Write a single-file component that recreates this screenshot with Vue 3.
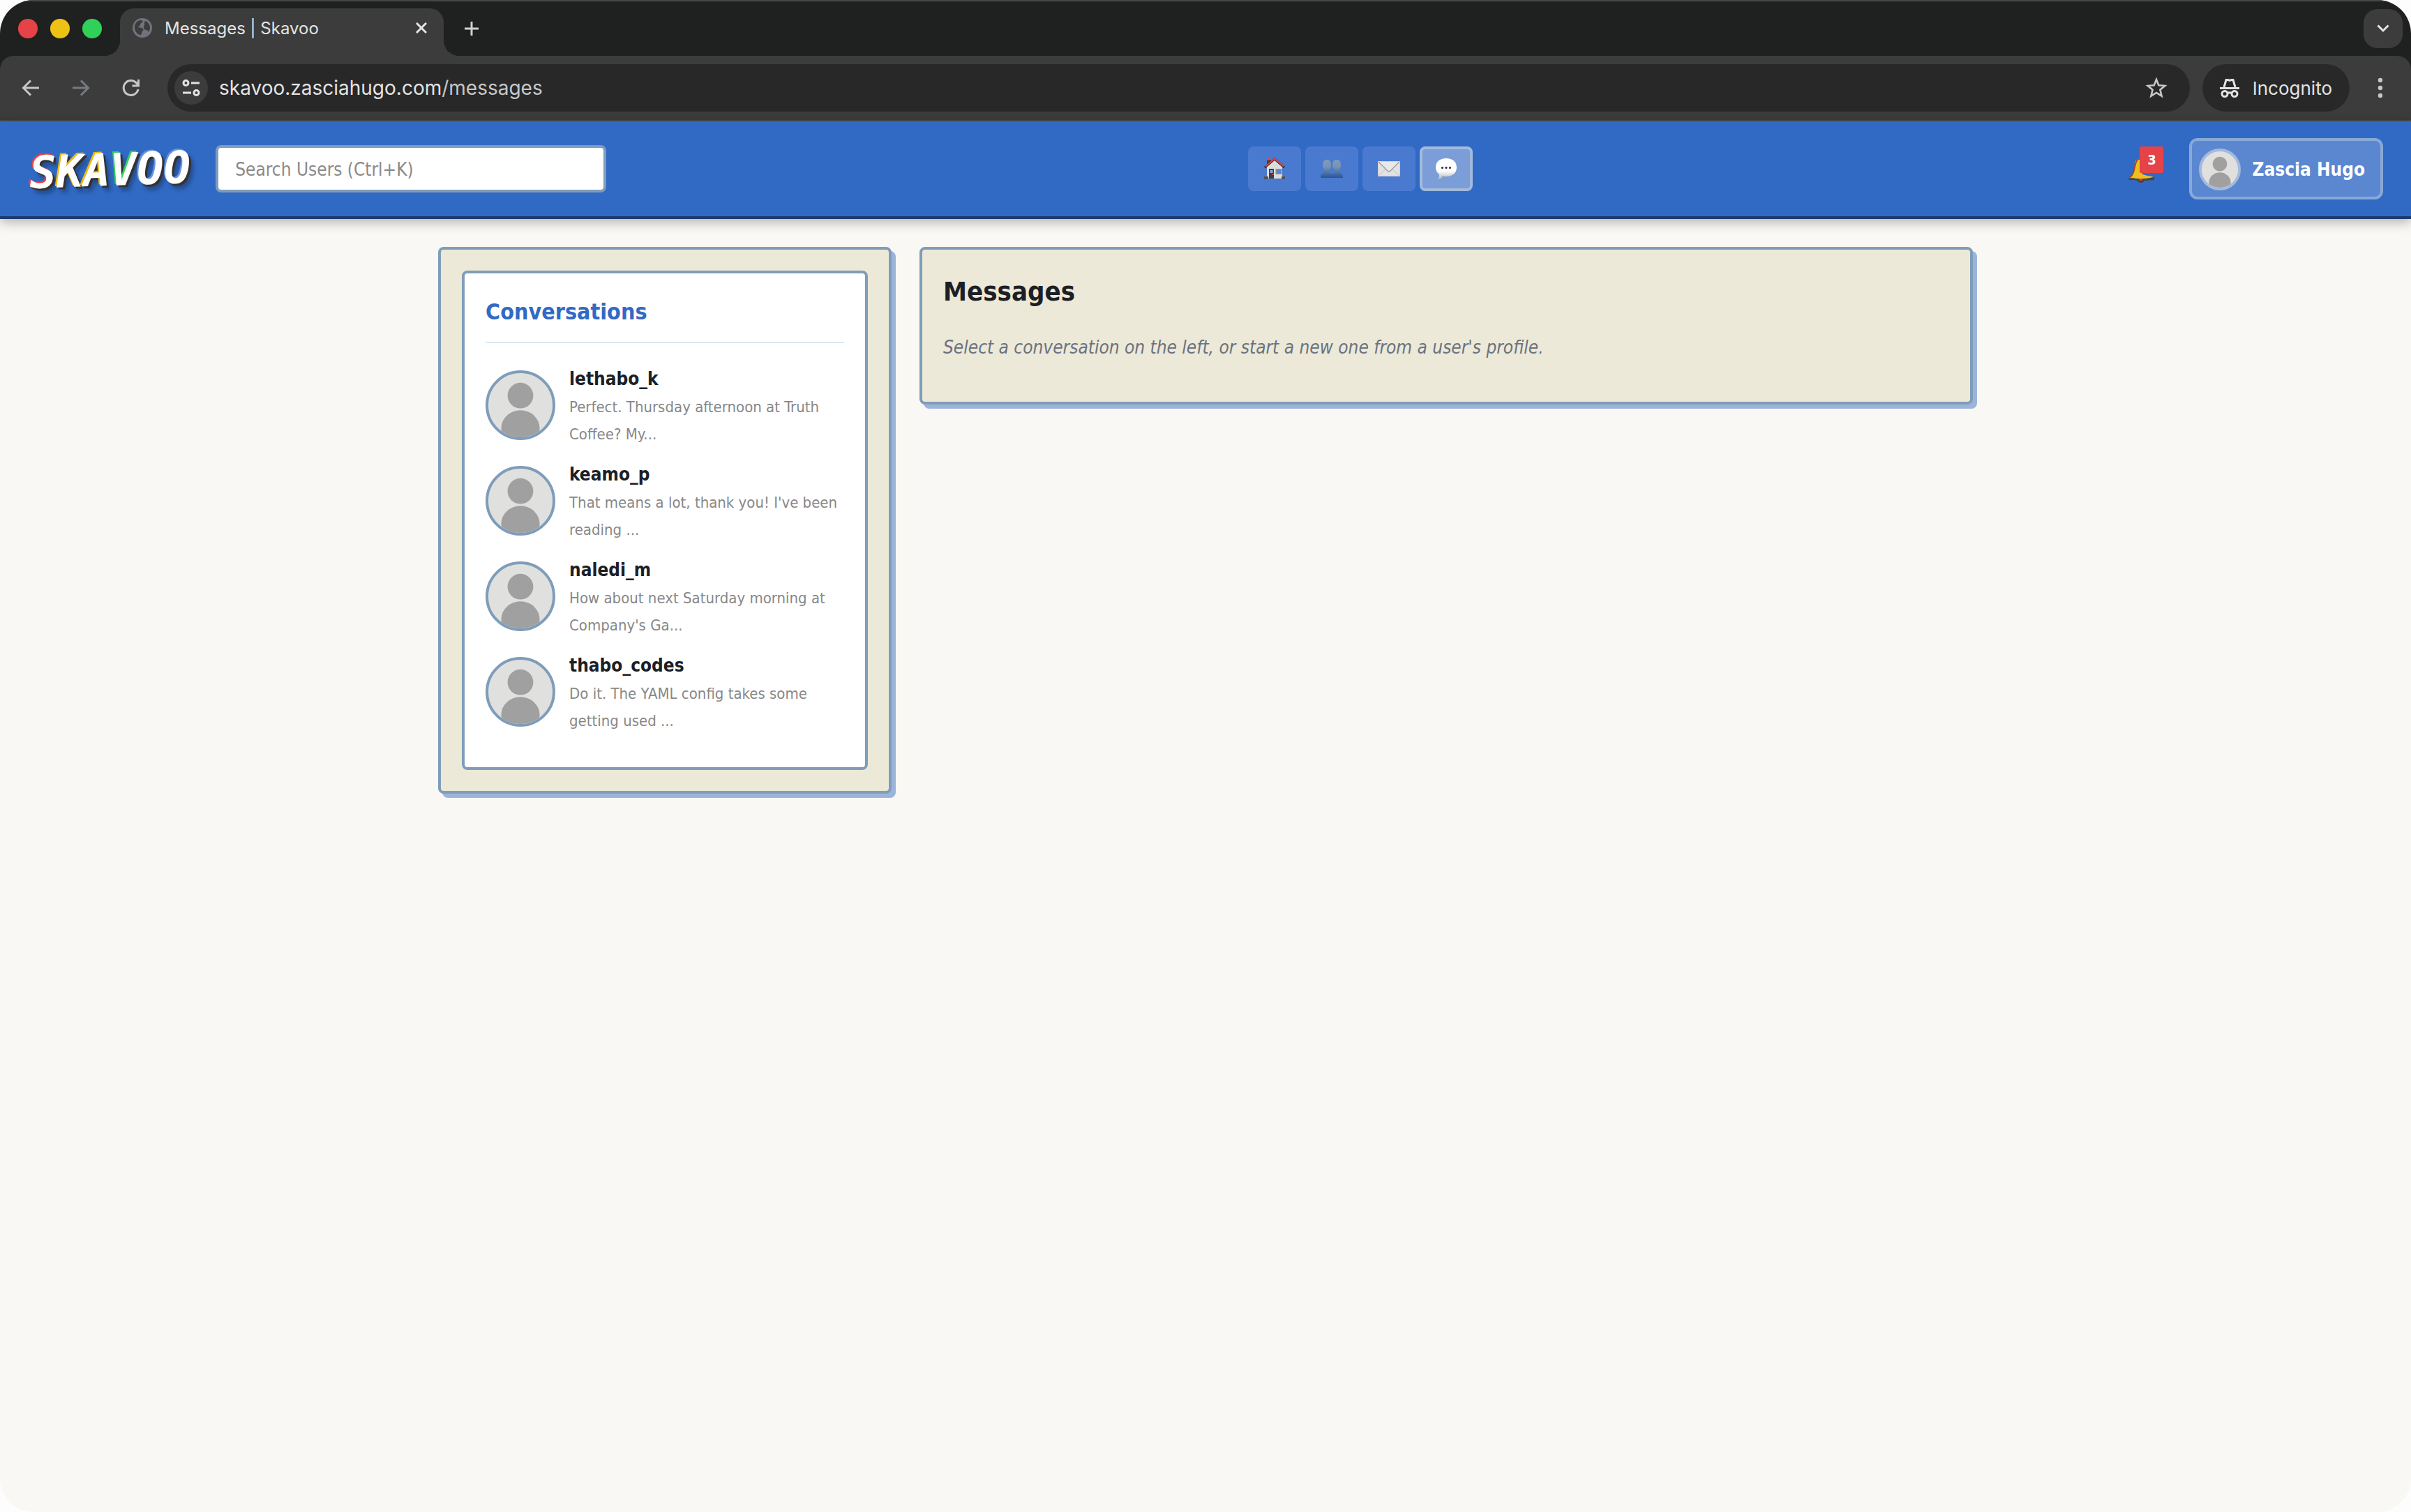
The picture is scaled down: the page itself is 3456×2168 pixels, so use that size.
<template>
  <div class="browser">
    <div class="tab-strip">
      <div class="lights">
        <span class="light red"></span>
        <span class="light yellow"></span>
        <span class="light green"></span>
      </div>
      <div class="tab">
        <svg class="globe" viewBox="0 0 28 28">
          <circle cx="14" cy="14" r="14" fill="#6f737a" />
          <path d="M3 13c0-5 3-9 8-10 3 0 4 1 3 3-1 1-3 1-3 3s-1 2-3 3c0 2 3 1 5 2 3 1 3 3 2 4-2 1-2 2-2 4 0 1-1 2-2 2-5-1-8-6-8-11zM18 4c5 2 7 6 7 10 0 2-1 4-2 6-1-1-1-3-3-3-3 0-4-2-4-4s2-3 1-5c0-2 0-2 1-4z" fill="#3c3c3c" />
        </svg>
        <span class="tab-title">Messages | Skavoo</span>
        <button class="bare" aria-label="Close tab">
          <svg width="16" height="16" viewBox="0 0 16 16"><path d="M1 1l14 14M15 1L1 15" stroke="#e3e3e3" stroke-width="3" /></svg>
        </button>
      </div>
      <button class="bare new-tab" aria-label="New tab">
        <svg width="20" height="20" viewBox="0 0 20 20"><path d="M10 0v20M0 10h20" stroke="#d0d0d0" stroke-width="3" /></svg>
      </button>
      <button class="tab-search" aria-label="Search tabs">
        <svg width="18" height="12" viewBox="0 0 18 12"><path d="M1.5 1.5L9 9l7.5-7.5" fill="none" stroke="#e3e3e3" stroke-width="3" /></svg>
      </button>
    </div>

    <div class="toolbar">
      <div class="nav-buttons">
        <button class="bare" aria-label="Back">
          <svg width="26" height="24" viewBox="0 0 26 24"><path d="M25 12H3M13 1.5L2.5 12 13 22.5" fill="none" stroke="#c7c7c7" stroke-width="3" /></svg>
        </button>
        <button class="bare" aria-label="Forward">
          <svg width="26" height="24" viewBox="0 0 26 24"><path d="M1 12h22M13 1.5L23.5 12 13 22.5" fill="none" stroke="#777b80" stroke-width="3" /></svg>
        </button>
        <button class="bare" aria-label="Reload">
          <svg width="26" height="24" viewBox="0 0 26 24"><path d="M23 14A10.5 10.5 0 1 1 21 5.5L23.5 8.5M23.5 0v9h-9" fill="none" stroke="#c7c7c7" stroke-width="3" /></svg>
        </button>
      </div>
      <div class="address">
        <span class="site-info">
          <svg width="26" height="24" viewBox="0 0 26 24" fill="none" stroke="#e3e3e3" stroke-width="3">
            <circle cx="5.5" cy="5" r="3.5" />
            <path d="M13 5h12M1 19h12" />
            <circle cx="20.5" cy="19" r="3.5" />
          </svg>
        </span>
        <span class="url">skavoo.zasciahugo.com<span class="path">/messages</span></span>
        <button class="bare" aria-label="Bookmark this tab">
          <svg width="32" height="32" viewBox="0 0 32 32"><path d="M16 4l3.300 8.300 9 .7-6.900 5.800 2.200 8.900L16 23l-7.600 4.700 2.200-8.900L3.700 13l9-.7z" fill="none" stroke="#c7c7c7" stroke-width="2.600" /></svg>
        </button>
      </div>
      <div class="incognito">
        <svg width="28" height="28" viewBox="0 0 28 28" fill="none" stroke="#e3e3e3" stroke-width="3">
          <path d="M6 13L9 2.500h2.500l2.500 1 2.500-1H19L22 13M0 14.500h28" />
          <circle cx="7" cy="22.500" r="4" />
          <circle cx="21" cy="22.500" r="4" />
          <path d="M11 21.500c2-1 4-1 6 0" />
        </svg>
        <span>Incognito</span>
      </div>
      <button class="bare" aria-label="Menu">
        <svg width="8" height="30" viewBox="0 0 8 30" fill="#c7c7c7"><circle cx="4" cy="4" r="3.2" /><circle cx="4" cy="15" r="3.2" /><circle cx="4" cy="26" r="3.2" /></svg>
      </button>
    </div>

    <header class="site-header">
      <div class="header-left">
        <a href="#" class="logo" aria-label="Skavoo">
          <span v-for="(l, i) in logo" :key="i" :class="l.tone">{{ l.char }}</span>
        </a>
        <input class="search" type="text" placeholder="Search Users (Ctrl+K)" aria-label="Search users" />
      </div>

      <nav class="main-nav">
        <a href="#" class="nav-item" aria-label="Home">
          <svg width="32" height="32" viewBox="0 0 32 32">
            <path d="M5 12V3h6v5z" fill="#3a3a3a" /><path d="M5 1h5v3H5z" fill="#e54348" />
            <path d="M5 13L16 3l11 10v17H5z" fill="#dcdcdc" />
            <path d="M2 14L16 2l14 12" fill="none" stroke="#2c2c2c" stroke-width="3" />
            <path d="M3 12.500L16 1.500l13 11" fill="none" stroke="#e54348" stroke-width="2" />
            <path d="M8 16h7v14H8z" fill="#3f3f3f" /><path d="M9.500 18h4v4h-4z" fill="#7fa6d8" />
            <path d="M12 24h3v1h-3z" fill="#e54348" />
            <path d="M17.500 16h9v8h-9z" fill="#8d8d8d" /><path d="M19 17.500h6v5h-6z" fill="#5b87cf" />
            <path d="M1 27h6v4H1zM26 27h5v4h-5z" fill="#55544e" />
          </svg>
        </a>
        <a href="#" class="nav-item" aria-label="Friends">
          <svg width="32" height="28" viewBox="0 0 32 28">
            <defs><linearGradient id="bust" x1="0" y1="0" x2="0" y2="1"><stop offset="0" stop-color="#7d9cbc" /><stop offset=".4" stop-color="#7893b4" /><stop offset="1" stop-color="#28559c" /></linearGradient></defs>
            <path d="M9 1c4 0 6 3 6 7s-1 6-3 8v3c2 1 3 1 4 2 1-1 3-1 4-2v-3c-2-2-3-4-3-8s2-7 6-7 6 3 6 7-1 6-3 8v3c4 1 6 3 6 8H0c0-5 2-7 6-8v-3c-2-2-3-4-3-8s2-7 6-7z" fill="url(#bust)" />
          </svg>
        </a>
        <a href="#" class="nav-item" aria-label="Mail">
          <svg width="32" height="22" viewBox="0 0 32 22">
            <path d="M0 0h32v22H0z" fill="#e2e2e2" />
            <path d="M1 21l11-10M31 21L20 11" stroke="#c2c2c2" stroke-width="1" />
            <path d="M1 1l13 13q2 2 4 0L31 1" fill="#e9e9e9" stroke="#9c9c9c" stroke-width="1.400" />
            <path d="M.5.5h31v21H.5z" fill="none" stroke="#cfcfcf" />
          </svg>
        </a>
        <a href="#" class="nav-item active" aria-label="Messages">
          <svg width="32" height="32" viewBox="0 0 32 32">
            <defs><linearGradient id="bubble" x1="0" y1="0" x2="0" y2="1"><stop offset=".6" stop-color="#fff" /><stop offset="1" stop-color="#b4b6ba" /></linearGradient></defs>
            <path d="M16 1c9 0 15 5 15 13s-6 13-15 13c-2 0-4 0-5-1-1 3-3 5-7 5 2-2 2-4 2-7-3-2-5-6-5-10C1 6 7 1 16 1z" fill="url(#bubble)" />
            <circle cx="10.5" cy="14.5" r="1.500" fill="#222" /><circle cx="16" cy="14.500" r="1.500" fill="#222" /><circle cx="21.500" cy="14.500" r="1.500" fill="#222" />
          </svg>
        </a>
      </nav>

      <div class="header-right">
        <button class="bell" aria-label="Notifications">
          <svg width="40" height="36" viewBox="0 0 40 36">
            <path d="M13 1h7v20q5 3 15 4l3 3H3c7-6 6-12 7-20 0-4 1-6 3-7z" fill="#edc01c" />
            <path d="M14 1C8 8 12 20 2 27" fill="none" stroke="#a04630" stroke-width="2" />
            <path d="M1 28l6-1 11 2 19-3q2 1 1 4l-14 1-18-1q-5 1-5-2z" fill="#4a443c" />
            <path d="M6 26l12 1 15-1" fill="none" stroke="#edc01c" stroke-width="2" />
            <path d="M13 29h11q-1 5-5 5t-6-5z" fill="#5a3a30" />
            <path d="M15 28h7l-2 3h-3z" fill="#d0483c" />
          </svg>
          <span class="badge">3</span>
        </button>
        <button class="profile">
          <svg class="avatar small" viewBox="0 0 100 100"><circle cx="50" cy="35" r="20" /><ellipse cx="50" cy="86" rx="30" ry="28" /></svg>
          <span>Zascia Hugo</span>
        </button>
      </div>
    </header>

    <main class="layout">
      <aside class="card">
        <section class="panel">
          <h2>Conversations</h2>
          <ul class="conversations">
            <li v-for="c in conversations" :key="c.name">
              <a href="#" class="conversation">
                <svg class="avatar" viewBox="0 0 100 100"><circle cx="50" cy="35" r="20" /><ellipse cx="50" cy="86" rx="30" ry="28" /></svg>
                <span class="conversation-text">
                  <strong class="name">{{ c.name }}</strong>
                  <span class="preview">{{ c.preview }}</span>
                </span>
              </a>
            </li>
          </ul>
        </section>
      </aside>
      <section class="card">
        <h1>Messages</h1>
        <p class="hint">Select a conversation on the left, or start a new one from a user's profile.</p>
      </section>
    </main>
  </div>
</template>

<script setup>
import { ref } from 'vue'

const logo = [
  { char: 'S', tone: 'tone-red' },
  { char: 'K', tone: 'tone-yellow' },
  { char: 'A', tone: 'tone-yellow' },
  { char: 'V', tone: 'tone-green' },
  { char: 'O', tone: 'tone-blue' },
  { char: 'O', tone: 'tone-blue' },
]

const conversations = ref([
  { name: 'lethabo_k', preview: 'Perfect. Thursday afternoon at Truth Coffee? My...' },
  { name: 'keamo_p', preview: "That means a lot, thank you! I've been reading ..." },
  { name: 'naledi_m', preview: "How about next Saturday morning at Company's Ga..." },
  { name: 'thabo_codes', preview: 'Do it. The YAML config takes some getting used ...' },
])
</script>

<style>
body { background: #fdfdfd; }
</style>

<style scoped>
* { box-sizing: border-box; }
button, input { font: inherit; margin: 0; }
svg { display: block; flex: none; }
a { color: inherit; text-decoration: none; }

.browser {
  min-height: 100vh;
  background: #f9f8f4;
  border-radius: 48px;
  overflow: hidden;
  font-family: "DejaVu Sans Condensed", "DejaVu Sans", sans-serif;
  font-size: 26px;
  color: #1c1f26;
}
.bare { background: none; border: none; padding: 0; cursor: pointer; }

/* browser chrome */
.tab-strip { display: flex; align-items: flex-end; height: 80px; padding: 0 12px 0 26px; background: #1f2120; border-top: 2px solid #454746; font-family: Inter, sans-serif; }
.lights { display: flex; gap: 18px; align-self: center; margin-right: 26px; }
.light { width: 28px; height: 28px; border-radius: 50%; }
.red { background: #e54348; }
.yellow { background: #edc214; }
.green { background: #30d158; }
.tab { position: relative; display: flex; align-items: center; width: 464px; height: 68px; padding: 0 24px 12px 18px; background: #3c3c3c; border-radius: 20px 20px 0 0; }
.tab::before, .tab::after { content: ""; position: absolute; bottom: 0; width: 22px; height: 22px; }
.tab::before { right: 100%; background: radial-gradient(circle at 0 0, transparent 22px, #3c3c3c 22px); }
.tab::after { left: 100%; background: radial-gradient(circle at 100% 0, transparent 22px, #3c3c3c 22px); }
.globe { width: 28px; height: 28px; }
.tab-title { flex: 1; margin-left: 18px; font-size: 24px; color: #e3e3e3; }
.new-tab { align-self: center; margin-left: 30px; }
.tab-search { display: flex; align-items: center; justify-content: center; align-self: center; width: 56px; height: 56px; margin-left: auto; border: none; border-radius: 20px; background: #3c3c3c; }
.toolbar { display: flex; align-items: center; height: 94px; padding: 0 40px 0 31px; background: #3c3c3c; border-bottom: 2px solid #4a4a4a; box-shadow: 0 -20px 0 #1f2120; border-radius: 20px 20px 0 0; font-family: Inter, sans-serif; }
.nav-buttons { display: flex; gap: 46px; margin-right: 39px; }
.address { display: flex; align-items: center; flex: 1; height: 68px; padding: 0 32px 0 10px; background: #282828; border-radius: 34px; }
.site-info { display: flex; align-items: center; justify-content: center; width: 48px; height: 48px; border-radius: 50%; background: #3c3c3c; }
.url { flex: 1; margin-left: 16px; font-size: 28px; color: #e3e3e3; }
.path { color: #c7c7c7; }
.incognito { display: flex; align-items: center; gap: 19px; height: 68px; margin: 0 40px 0 18px; padding: 0 25px; background: #282828; border-radius: 34px; font-size: 26px; color: #e3e3e3; }

/* site header */
.site-header { position: relative; display: flex; align-items: center; justify-content: space-between; height: 140px; padding: 0 40px; background: #316ac5; border-bottom: 4px solid #1c3a70; box-shadow: 0 4px 16px rgba(0, 0, 0, 0.3); }
.header-left { display: flex; align-items: center; gap: 36px; }
.logo { padding: 4px 0 0 2px; font-family: "DejaVu Sans Mono", monospace; font-weight: bold; font-style: italic; font-size: 64px; line-height: 72px; color: #fff; transform: rotate(-2deg); }
.tone-red { text-shadow: -2px -2px 0 #e54348, 3px 3px 0 #333, 6px 8px 6px rgba(0, 0, 0, 0.3); }
.tone-yellow { text-shadow: -2px -2px 0 #f0b90f, 3px 3px 0 #333, 6px 8px 6px rgba(0, 0, 0, 0.3); }
.tone-green { text-shadow: -2px -2px 0 #30d158, 3px 3px 0 #333, 6px 8px 6px rgba(0, 0, 0, 0.3); }
.tone-blue { text-shadow: -2px -2px 0 #6a95e0, 3px 3px 0 #333, 6px 8px 6px rgba(0, 0, 0, 0.3); }
.search { width: 560px; height: 68px; padding: 2px 24px 0; border: 4px solid #7f9db9; border-radius: 8px; background: #fff; }
.search::placeholder { color: #8a8a8a; opacity: 1; }
.main-nav { display: flex; gap: 6px; }
.nav-item { display: flex; align-items: center; justify-content: center; width: 76px; height: 64px; border-radius: 8px; background: #4a7acf; }
.nav-item.active { background: #7b9ed8; border: 4px solid #a3badd; }
.header-right { display: flex; align-items: center; gap: 18px; }
.bell { position: relative; padding: 18px 30px 10px 20px; border: none; background: none; }
.badge { position: absolute; top: 0; left: 37px; width: 34px; height: 38px; border-radius: 2px; background: #e54348; color: #fff; font-size: 20px; font-weight: bold; line-height: 38px; text-align: center; }
.profile { display: flex; align-items: center; gap: 16px; height: 88px; padding: 2px 22px 0 10px; border: 4px solid #89a9d8; border-radius: 12px; background: #5b87d0; color: #fff; font-weight: bold; }
.avatar { width: 100px; height: 100px; border: 4px solid #7f9db9; border-radius: 50%; background: #e0e0de; fill: #a0a0a0; }
.avatar.small { width: 60px; height: 60px; border-color: #a3badd; }

/* content */
.layout { display: grid; grid-template-columns: 650px 1fr; align-items: start; gap: 40px; max-width: 2200px; margin: 40px auto; }
.card { min-width: 0; padding: 30px; border: 4px solid #7f9db9; border-radius: 8px; background: #ece9d8; box-shadow: 6px 6px 0 #9cb4da; }
.panel { padding: 30px 30px 47px; border: 4px solid #7f9db9; border-radius: 8px; background: #fff; }
h1 { margin: 0 0 28px; font-size: 38px; line-height: 60px; }
h2 { margin: 0 0 27px; padding-bottom: 18px; border-bottom: 2px solid #dce7f3; font-size: 32px; line-height: 50px; color: #316ac5; }
.conversations { display: flex; flex-direction: column; gap: 14px; margin: 0; padding: 0; list-style: none; }
.conversation { display: flex; align-items: center; gap: 20px; }
.conversation-text { min-width: 0; }
.name { display: block; padding-top: 4px; font-size: 26px; line-height: 41px; }
.preview { display: block; font-size: 22px; line-height: 39px; color: #888; }
.hint { margin: 0 0 26px; font-size: 26px; line-height: 44px; font-style: italic; color: #6b7280; }
</style>
